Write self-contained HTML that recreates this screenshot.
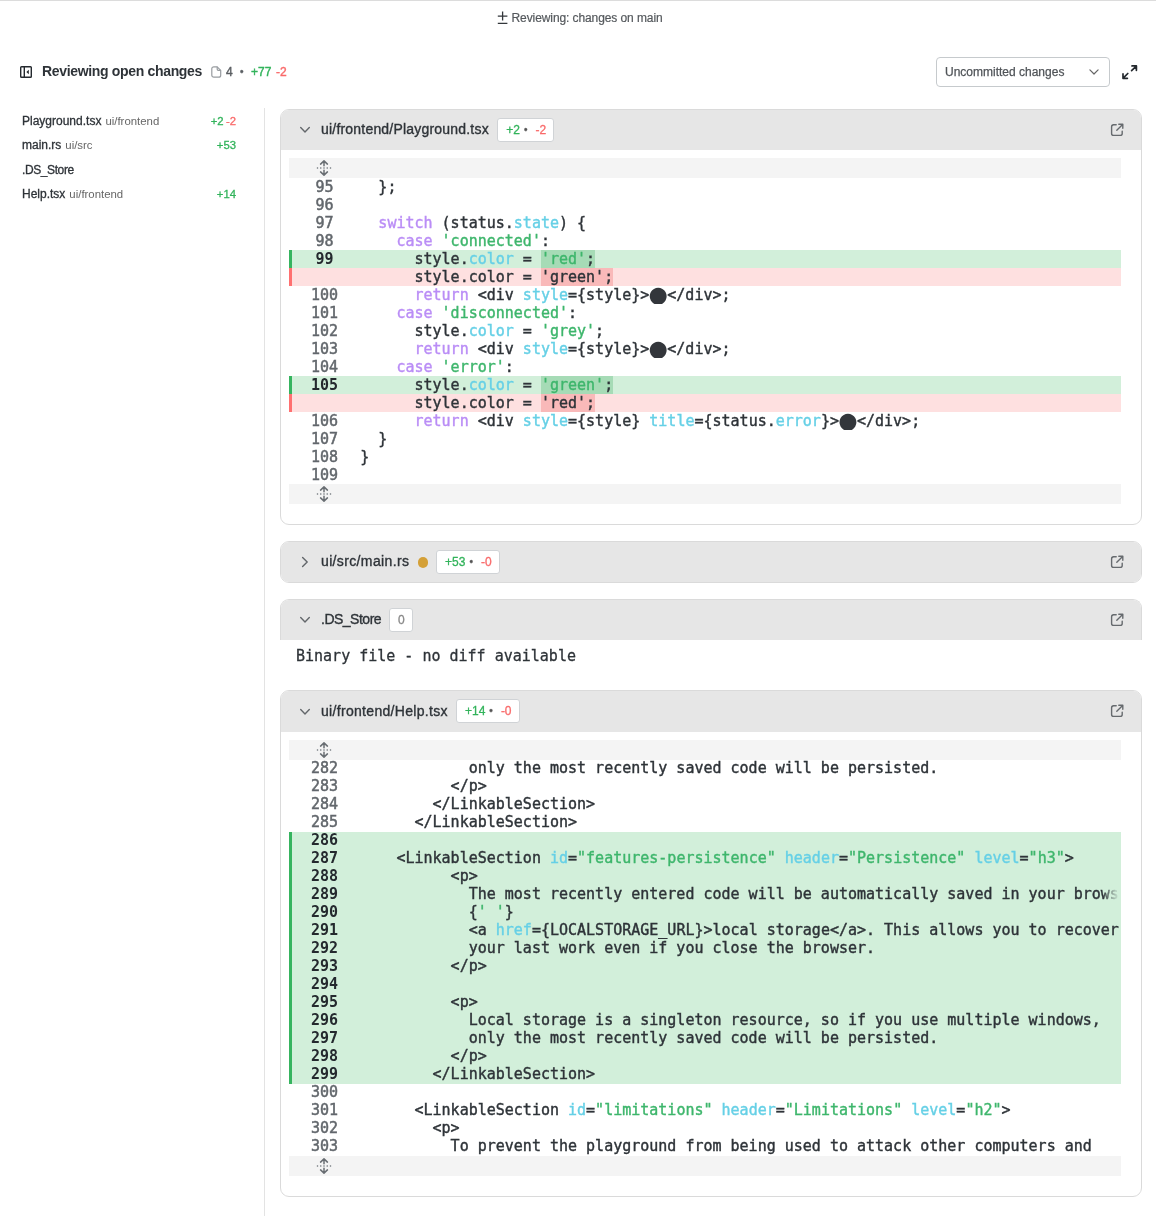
<!DOCTYPE html>
<html lang="en"><head><meta charset="utf-8"><title>Reviewing open changes</title>
<style>
html,body{margin:0;padding:0;background:#fff}
body{width:1156px;height:1216px;position:relative;overflow:hidden;font-family:"Liberation Sans",Arial,sans-serif;color:#2e3338}
#root{position:absolute;left:0;top:0;width:1156px;height:1216px;will-change:transform}
.topline{position:absolute;left:0;top:0;width:1156px;height:1px;background:#dcdcdc}
.crumb{position:absolute;left:511.5px;top:11px;white-space:nowrap;font-size:12px;line-height:14px;color:#55595d;letter-spacing:-0.09px;-webkit-text-stroke:0.2px}
.crumb .pm{color:#333;margin-right:4px}
.title{position:absolute;left:42px;top:62px;font-size:14px;line-height:18px;font-weight:bold;color:#2e3338;white-space:nowrap;letter-spacing:-0.33px}
.ts{position:absolute;top:64px;font-size:12px;line-height:16px;color:#5a5e62;white-space:nowrap;-webkit-text-stroke:0.4px}
.g{color:#32b35b}.r{color:#f96a6a}
.side{position:absolute;left:22px;top:0;width:214px;font-size:12px}
.side .it{position:absolute;left:0;width:214px;height:16px;line-height:16px;white-space:nowrap;color:#2e3338}
.side .it .nm{-webkit-text-stroke:0.3px}
.side .it .pa{color:#666;font-size:11.4px;margin-left:4px}
.side .it .st{position:absolute;right:0;top:0;font-size:11.3px;word-spacing:-0.8px;-webkit-text-stroke:0.3px}
.vdiv{position:absolute;left:264px;top:108px;width:1px;height:1108px;background:#e3e3e3}
.sel{position:absolute;left:936px;top:57px;width:172px;height:28px;border:1px solid #c6cacd;border-radius:4px;font-size:12px;line-height:29px;color:#505458;box-sizing:content-box;-webkit-text-stroke:0.25px}
.sel span{margin-left:8px}
.card{position:absolute;left:280px;width:860px;border:1px solid #dadada;border-radius:9px;box-sizing:content-box;background:#fff;overflow:hidden}
.card .hd{position:absolute;left:0;top:0;width:860px;height:40px;background:#e6e6e6;line-height:39px;font-size:14px;white-space:nowrap}
.card .hd .chev{position:absolute}
.card .hd .fn{position:absolute;left:40px;top:0;color:#2e3338;-webkit-text-stroke:0.35px}
.card .hd .ext{position:absolute;left:828px;top:12px}
.card.flat{border-bottom:0;border-radius:9px 9px 0 0}
.bdg{position:absolute;top:8px;height:22px;line-height:22px;background:#fff;border:1px solid #d0d3d6;border-radius:3px;font-size:12px;box-sizing:content-box;text-align:left;text-indent:8px;-webkit-text-stroke:0.3px}
.bdg span{text-indent:0}
.bdg .sep{color:#555;margin:0 8px 0 4px;font-size:10px;position:relative;top:-1px}
.odot{position:absolute;left:136.5px;top:15px;width:10.6px;height:10.6px;border-radius:50%;background:#d4a037}
.code{position:absolute;left:8px;top:48px;width:832px;font-family:"DejaVu Sans Mono","Liberation Mono",monospace;font-size:15px;letter-spacing:0;-webkit-text-stroke:0.4px}
.exp{height:20px;background:#f4f4f4;position:relative}
.exp svg{position:absolute;left:27px;top:2px}
.ln{height:18px;line-height:18px;position:relative;white-space:pre;overflow:hidden}
.ln .no{position:absolute;left:0;top:0;width:71px;text-align:center;color:#62676c;-webkit-text-stroke:0.5px}
.ln .cd{position:absolute;left:71.3px;top:0;color:#2e3338}
.ln.add{background:#d2efda;box-shadow:inset 3px 0 0 #36b45f}
.ln.del{background:#fee0e0;box-shadow:inset 3px 0 0 #ff7070}
.ln.add .no,.ln.del .no{font-weight:bold;color:#24292e;-webkit-text-stroke:0}
.fade{position:absolute;right:0;top:0;width:18px;height:18px;background:linear-gradient(to right,rgba(210,239,218,0),rgba(210,239,218,0.6) 50%,#d2efda 90%)}
.k{color:#ba8df6}.p{color:#66d0e6}.s{color:#3eb66c}
.hl{position:absolute;top:0;height:18px}
.ha{background:#a6dbb6}
.hx{background:#f9b9b9}
.c2 .ln .no,.c2 .ln .cd{top:-1px}
.dot{display:inline-block;width:18px;height:18px;line-height:18px;vertical-align:top;font-family:"DejaVu Sans",sans-serif;font-size:22.2px;letter-spacing:0;text-indent:-1px;text-align:center;-webkit-text-stroke:0;position:relative;top:-0.9px;left:0.2px;color:#33363b}
.bin{position:absolute;left:296px;top:647px;font-family:"DejaVu Sans Mono","Liberation Mono",monospace;font-size:15px;line-height:18px;letter-spacing:0;color:#2e3338;white-space:pre;-webkit-text-stroke:0.3px}
</style></head><body>
<div id="root"><div class="topline"></div>
<svg style="position:absolute;left:496px;top:10px" width="13" height="15" viewBox="0 0 13 15"><path d="M1.8 6.2h9.6M6.6 1.6v9M1.8 13.4h9.6" fill="none" stroke="#33373b" stroke-width="1.3"/></svg><div class="crumb">Reviewing: changes on main</div>

<svg style="position:absolute;left:19px;top:65px" width="14" height="14" viewBox="0 0 14 14"><rect x="1.7" y="1.7" width="10.6" height="10.6" rx="0.8" fill="none" stroke="#24292e" stroke-width="1.4"/><path d="M5.3 1.7v10.6" stroke="#24292e" stroke-width="1.4"/><path d="M9.8 4.8L7.4 7l2.4 2.2z" fill="#24292e"/></svg>
<div class="title">Reviewing open changes</div>
<svg style="position:absolute;left:210px;top:65px" width="13" height="14" viewBox="0 0 13 14"><g fill="none" stroke="#989ca0" stroke-width="1.2" stroke-linejoin="round"><path d="M3.8 1.8h3.4l3.5 3.5v4.9a2 2 0 0 1-2 2H3.8a2 2 0 0 1-2-2V3.8a2 2 0 0 1 2-2z"/><path d="M7.2 1.8v2.5a1 1 0 0 0 1 1h2.5"/></g></svg>
<div class="ts" style="left:226px">4</div><div class="ts" style="left:240px;font-size:10px">&bull;</div><div class="ts" style="left:251px"><span class="g">+77</span></div><div class="ts" style="left:276px"><span class="r">-2</span></div>
<div class="side">
<div class="it" style="top:113px"><span class="nm">Playground.tsx</span><span class="pa">ui/frontend</span><span class="st"><span class="g">+2</span> <span class="r">-2</span></span></div>
<div class="it" style="top:137px"><span class="nm">main.rs</span><span class="pa">ui/src</span><span class="st"><span class="g">+53</span></span></div>
<div class="it" style="top:162px"><span class="nm" style="letter-spacing:-0.4px">.DS_Store</span><span class="st"></span></div>
<div class="it" style="top:186px"><span class="nm">Help.tsx</span><span class="pa">ui/frontend</span><span class="st"><span class="g">+14</span></span></div>
</div>
<div class="vdiv"></div>
<div class="sel"><span>Uncommitted changes</span><svg style="position:absolute;left:151px;top:10px" width="12" height="8" viewBox="0 0 12 8"><path d="M1.9 1.9L6 6l4.1-4.1" fill="none" stroke="#666" stroke-width="1.2" stroke-linecap="round" stroke-linejoin="round"/></svg></div>
<svg style="position:absolute;left:1121px;top:64px" width="17" height="16" viewBox="0 0 17 16"><g fill="none" stroke="#24292e" stroke-width="1.7" stroke-linecap="round" stroke-linejoin="round"><path d="M11 1.9h4.4v4.4M15 2.3L10.6 6.7"/><path d="M6.4 14.3H2v-4.4M2.4 13.9l4.4-4.4"/></g></svg>
<div class="card " style="top:109px;height:414px"><div class="hd"><svg class="chev" style="left:18px;top:16px" width="12" height="8" viewBox="0 0 12 8"><path d="M1.7 1.6L6 5.9l4.3-4.3" fill="none" stroke="#63676b" stroke-width="1.4" stroke-linecap="round" stroke-linejoin="round"/></svg><span class="fn" style="letter-spacing:0.200px">ui/frontend/Playground.tsx</span><span class="bdg" style="left:216.3px;width:55.2px"><span class="g">+2</span><span class="sep">&bull;</span><span class="r">-2</span></span><svg class="ext" width="16" height="16" viewBox="0 0 16 16"><g fill="none" stroke="#666a6e" stroke-width="1.4" stroke-linecap="round" stroke-linejoin="round"><path d="M7.2 2.8H4.6a2 2 0 0 0-2 2v6.6a2 2 0 0 0 2 2h6.6a2 2 0 0 0 2-2V9.2"/><path d="M9.8 2.2h4v4M13.6 2.4L7.8 8.2"/></g></svg></div><div class="code"><div class="exp"><svg width="16" height="16" viewBox="0 0 16 16"><g fill="none" stroke="#686d72" stroke-width="1.5" stroke-linecap="round" stroke-linejoin="round"><path d="M8 0.9v4.8M4.6 4.1L8 0.9l3.4 3.2"/><path d="M8 15.1v-4.8M4.6 11.9L8 15.1l3.4-3.2"/><path d="M0.85 8h14.4" stroke-dasharray="1.3 1.95" stroke-linecap="butt" stroke-width="2" stroke="#9a9ea2"/></g></svg></div><div class="ln"><span class="no">95</span><span class="cd">  };</span></div><div class="ln"><span class="no">96</span><span class="cd"></span></div><div class="ln"><span class="no">97</span><span class="cd">  <span class="k">switch</span> (status.<span class="p">state</span>) {</span></div><div class="ln"><span class="no">98</span><span class="cd">    <span class="k">case</span> <span class="s">'connected'</span>:</span></div><div class="ln add"><span class="hl ha" style="left:252px;width:54px"></span><span class="no">99</span><span class="cd">      style.<span class="p">color</span> = <span class="s">'red'</span>;</span></div><div class="ln del"><span class="hl hx" style="left:252px;width:72px"></span><span class="no"></span><span class="cd">      style.color = 'green';</span></div><div class="ln"><span class="no">100</span><span class="cd">      <span class="k">return</span> &lt;div <span class="p">style</span>={style}&gt;<span class="dot">&#9679;</span>&lt;/div&gt;;</span></div><div class="ln"><span class="no">101</span><span class="cd">    <span class="k">case</span> <span class="s">'disconnected'</span>:</span></div><div class="ln"><span class="no">102</span><span class="cd">      style.<span class="p">color</span> = <span class="s">'grey'</span>;</span></div><div class="ln"><span class="no">103</span><span class="cd">      <span class="k">return</span> &lt;div <span class="p">style</span>={style}&gt;<span class="dot">&#9679;</span>&lt;/div&gt;;</span></div><div class="ln"><span class="no">104</span><span class="cd">    <span class="k">case</span> <span class="s">'error'</span>:</span></div><div class="ln add"><span class="hl ha" style="left:252px;width:72px"></span><span class="no">105</span><span class="cd">      style.<span class="p">color</span> = <span class="s">'green'</span>;</span></div><div class="ln del"><span class="hl hx" style="left:252px;width:54px"></span><span class="no"></span><span class="cd">      style.color = 'red';</span></div><div class="ln"><span class="no">106</span><span class="cd">      <span class="k">return</span> &lt;div <span class="p">style</span>={style} <span class="p">title</span>={status.<span class="p">error</span>}&gt;<span class="dot">&#9679;</span>&lt;/div&gt;;</span></div><div class="ln"><span class="no">107</span><span class="cd">  }</span></div><div class="ln"><span class="no">108</span><span class="cd">}</span></div><div class="ln"><span class="no">109</span><span class="cd"></span></div><div class="exp"><svg width="16" height="16" viewBox="0 0 16 16"><g fill="none" stroke="#686d72" stroke-width="1.5" stroke-linecap="round" stroke-linejoin="round"><path d="M8 0.9v4.8M4.6 4.1L8 0.9l3.4 3.2"/><path d="M8 15.1v-4.8M4.6 11.9L8 15.1l3.4-3.2"/><path d="M0.85 8h14.4" stroke-dasharray="1.3 1.95" stroke-linecap="butt" stroke-width="2" stroke="#9a9ea2"/></g></svg></div></div></div>
<div class="card " style="top:541px;height:40px"><div class="hd"><svg class="chev" style="left:20px;top:14px" width="8" height="12" viewBox="0 0 8 12"><path d="M1.6 1.4L6.2 6 1.6 10.6" fill="none" stroke="#63676b" stroke-width="1.4" stroke-linecap="round" stroke-linejoin="round"/></svg><span class="fn" style="letter-spacing:0.360px">ui/src/main.rs</span><span class="odot"></span><span class="bdg" style="left:155.1px;width:62.4px"><span class="g">+53</span><span class="sep">&bull;</span><span class="r">-0</span></span><svg class="ext" width="16" height="16" viewBox="0 0 16 16"><g fill="none" stroke="#666a6e" stroke-width="1.4" stroke-linecap="round" stroke-linejoin="round"><path d="M7.2 2.8H4.6a2 2 0 0 0-2 2v6.6a2 2 0 0 0 2 2h6.6a2 2 0 0 0 2-2V9.2"/><path d="M9.8 2.2h4v4M13.6 2.4L7.8 8.2"/></g></svg></div></div>
<div class="card flat" style="top:599px;height:40px"><div class="hd"><svg class="chev" style="left:18px;top:16px" width="12" height="8" viewBox="0 0 12 8"><path d="M1.7 1.6L6 5.9l4.3-4.3" fill="none" stroke="#63676b" stroke-width="1.4" stroke-linecap="round" stroke-linejoin="round"/></svg><span class="fn" style="letter-spacing:-0.500px">.DS_Store</span><span class="bdg" style="left:108.4px;width:22.0px;text-indent:0;text-align:center;color:#888">0</span><svg class="ext" width="16" height="16" viewBox="0 0 16 16"><g fill="none" stroke="#666a6e" stroke-width="1.4" stroke-linecap="round" stroke-linejoin="round"><path d="M7.2 2.8H4.6a2 2 0 0 0-2 2v6.6a2 2 0 0 0 2 2h6.6a2 2 0 0 0 2-2V9.2"/><path d="M9.8 2.2h4v4M13.6 2.4L7.8 8.2"/></g></svg></div></div>
<div class="bin">Binary file - no diff available</div>
<div class="card " style="top:690px;height:505px"><div class="hd" style="height:41px;line-height:41px"><svg class="chev" style="left:18px;top:17px" width="12" height="8" viewBox="0 0 12 8"><path d="M1.7 1.6L6 5.9l4.3-4.3" fill="none" stroke="#63676b" stroke-width="1.4" stroke-linecap="round" stroke-linejoin="round"/></svg><span class="fn" style="letter-spacing:0.310px">ui/frontend/Help.tsx</span><span class="bdg" style="left:175.0px;width:62.4px"><span class="g">+14</span><span class="sep">&bull;</span><span class="r">-0</span></span><svg class="ext" width="16" height="16" viewBox="0 0 16 16"><g fill="none" stroke="#666a6e" stroke-width="1.4" stroke-linecap="round" stroke-linejoin="round"><path d="M7.2 2.8H4.6a2 2 0 0 0-2 2v6.6a2 2 0 0 0 2 2h6.6a2 2 0 0 0 2-2V9.2"/><path d="M9.8 2.2h4v4M13.6 2.4L7.8 8.2"/></g></svg></div><div class="code c2" style="top:49px"><div class="exp"><svg width="16" height="16" viewBox="0 0 16 16"><g fill="none" stroke="#686d72" stroke-width="1.5" stroke-linecap="round" stroke-linejoin="round"><path d="M8 0.9v4.8M4.6 4.1L8 0.9l3.4 3.2"/><path d="M8 15.1v-4.8M4.6 11.9L8 15.1l3.4-3.2"/><path d="M0.85 8h14.4" stroke-dasharray="1.3 1.95" stroke-linecap="butt" stroke-width="2" stroke="#9a9ea2"/></g></svg></div><div class="ln"><span class="no">282</span><span class="cd">            only the most recently saved code will be persisted.</span></div><div class="ln"><span class="no">283</span><span class="cd">          &lt;/p&gt;</span></div><div class="ln"><span class="no">284</span><span class="cd">        &lt;/LinkableSection&gt;</span></div><div class="ln"><span class="no">285</span><span class="cd">      &lt;/LinkableSection&gt;</span></div><div class="ln add"><span class="no">286</span><span class="cd"></span></div><div class="ln add"><span class="no">287</span><span class="cd">    &lt;LinkableSection <span class="p">id</span>=<span class="s">"features-persistence"</span> <span class="p">header</span>=<span class="s">"Persistence"</span> <span class="p">level</span>=<span class="s">"h3"</span>&gt;</span></div><div class="ln add"><span class="no">288</span><span class="cd">          &lt;p&gt;</span></div><div class="ln add"><span class="no">289</span><span class="cd">            The most recently entered code will be automatically saved in your browser's</span><span class="fade"></span></div><div class="ln add"><span class="no">290</span><span class="cd">            {<span class="s">' '</span>}</span></div><div class="ln add"><span class="no">291</span><span class="cd">            &lt;a <span class="p">href</span>={LOCALSTORAGE_URL}&gt;local storage&lt;/a&gt;. This allows you to recover</span></div><div class="ln add"><span class="no">292</span><span class="cd">            your last work even if you close the browser.</span></div><div class="ln add"><span class="no">293</span><span class="cd">          &lt;/p&gt;</span></div><div class="ln add"><span class="no">294</span><span class="cd"></span></div><div class="ln add"><span class="no">295</span><span class="cd">          &lt;p&gt;</span></div><div class="ln add"><span class="no">296</span><span class="cd">            Local storage is a singleton resource, so if you use multiple windows,</span></div><div class="ln add"><span class="no">297</span><span class="cd">            only the most recently saved code will be persisted.</span></div><div class="ln add"><span class="no">298</span><span class="cd">          &lt;/p&gt;</span></div><div class="ln add"><span class="no">299</span><span class="cd">        &lt;/LinkableSection&gt;</span></div><div class="ln"><span class="no">300</span><span class="cd"></span></div><div class="ln"><span class="no">301</span><span class="cd">      &lt;LinkableSection <span class="p">id</span>=<span class="s">"limitations"</span> <span class="p">header</span>=<span class="s">"Limitations"</span> <span class="p">level</span>=<span class="s">"h2"</span>&gt;</span></div><div class="ln"><span class="no">302</span><span class="cd">        &lt;p&gt;</span></div><div class="ln"><span class="no">303</span><span class="cd">          To prevent the playground from being used to attack other computers and</span></div><div class="exp"><svg width="16" height="16" viewBox="0 0 16 16"><g fill="none" stroke="#686d72" stroke-width="1.5" stroke-linecap="round" stroke-linejoin="round"><path d="M8 0.9v4.8M4.6 4.1L8 0.9l3.4 3.2"/><path d="M8 15.1v-4.8M4.6 11.9L8 15.1l3.4-3.2"/><path d="M0.85 8h14.4" stroke-dasharray="1.3 1.95" stroke-linecap="butt" stroke-width="2" stroke="#9a9ea2"/></g></svg></div></div></div>
</div></body></html>
